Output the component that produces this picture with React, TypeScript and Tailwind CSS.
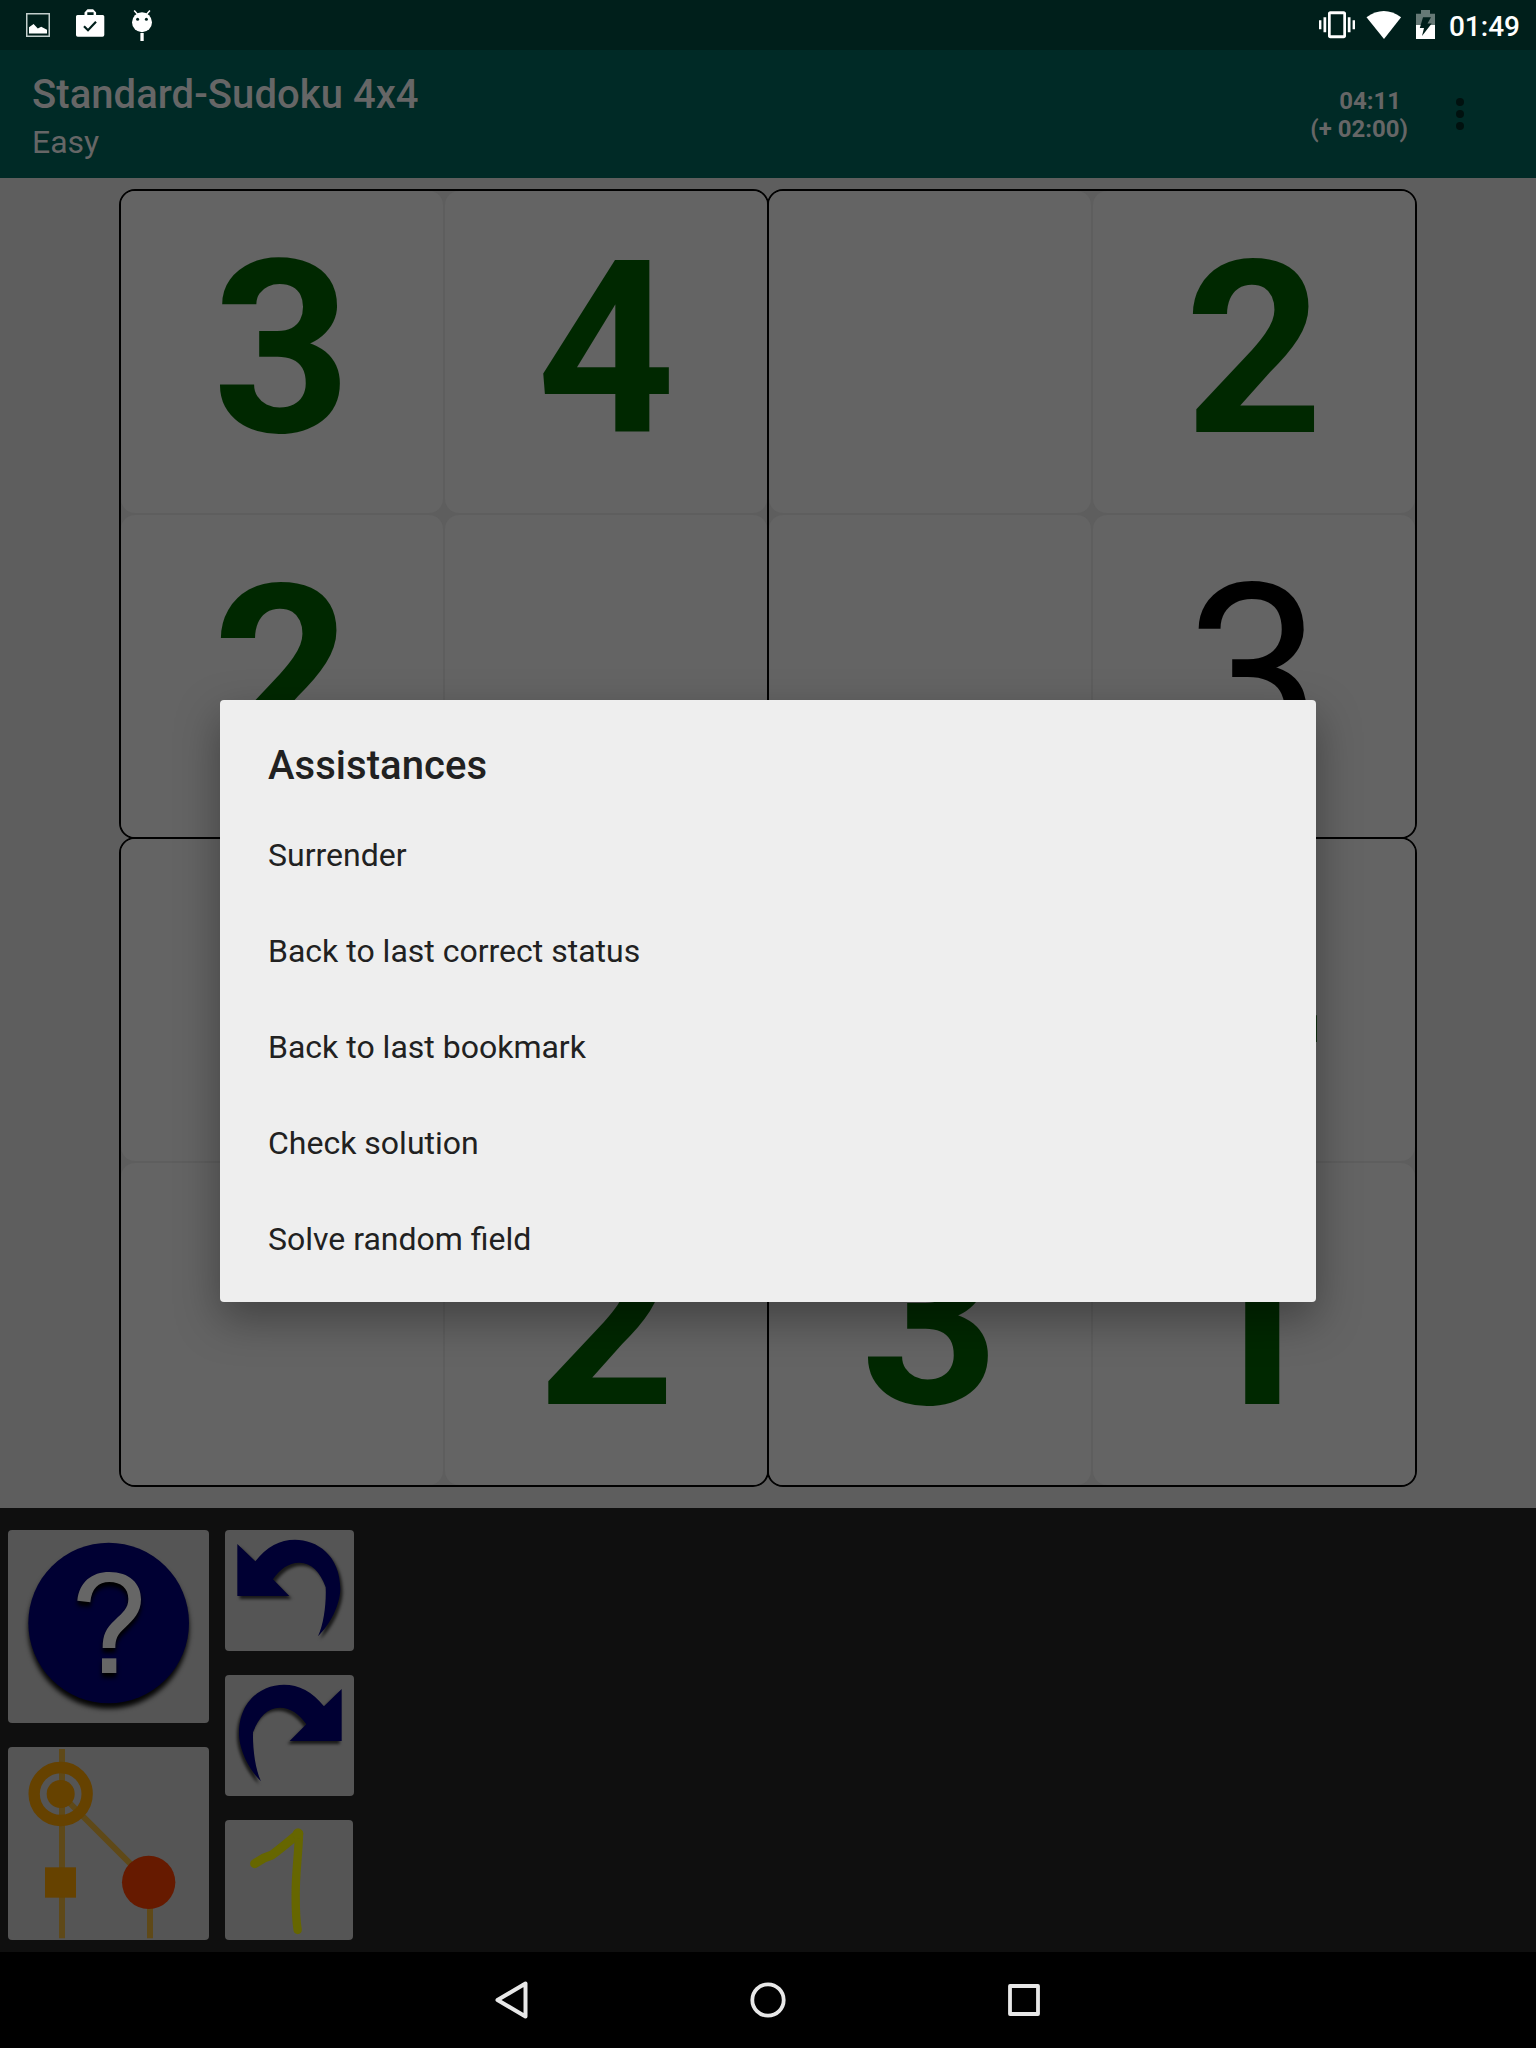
import React from "react";

type Cell = { value: string; given?: boolean };

const given = (value: string): Cell => ({ value, given: true });
const empty: Cell = { value: "" };

// Four 2x2 blocks, each listing its cells row by row.
const blocks: Cell[][] = [
  [given("3"), given("4"), given("2"), empty],
  [empty, given("2"), empty, { value: "3" }],
  [empty, empty, empty, given("2")],
  [empty, given("4"), given("3"), given("1")],
];

const assistances = [
  "Surrender",
  "Back to last correct status",
  "Back to last bookmark",
  "Check solution",
  "Solve random field",
];

function StatusBar() {
  return (
    <div className="flex h-[50px] items-start justify-between bg-[#001f1b] text-white">
      <svg className="h-[50px] w-[160px]" viewBox="0 0 160 50" fill="currentColor">
        <rect x="26.75" y="13.75" width="22.5" height="22.5" fill="none" stroke="#c2cecc" strokeWidth="1.5" />
        <path d="M29 33.5v-6.2l4.6-3.3 4.2 4.4 3.4-1.6 5.8 3v3.7z" />
        <path
          fillRule="evenodd"
          d="M84.500 15v-2.600l3-3.200h5.600l3 3.200V15h6.700q1.500 0 1.500 1.500v18.500q0 1.800-1.800 1.800H77.800q-1.800 0-1.800-1.800V16.500q0-1.500 1.500-1.500zm2.800 0h6.300v-2.800h-6.300z"
        />
        <path d="M84 26.200l4 4 8-8.500" fill="none" stroke="#001f1b" strokeWidth="2.200" />
        <circle cx="142" cy="22.200" r="10" />
        <path d="M134.200 10.500l3.500 4M149.900 10.500l-3.500 4" stroke="currentColor" strokeWidth="1.500" />
        <circle cx="137.600" cy="19.300" r="1.500" fill="#001f1b" />
        <circle cx="146.400" cy="19.300" r="1.500" fill="#001f1b" />
        <rect x="140.400" y="33" width="3.300" height="8" />
      </svg>
      <div className="flex h-[50px] items-start pr-4">
        <svg className="h-[50px] w-[131px]" viewBox="1318 0 131 50" fill="currentColor">
          <path
            transform="translate(1319 6.800) scale(1.500)"
            d="M0 15h1.600V9H0v6zm3 2h1.800V7H3v10zm19.400-8v6H24V9h-1.600zm-3.200 8H21V7h-1.800v10zM16.500 3h-9C6.670 3 6 3.670 6 4.500v15c0 .83.67 1.500 1.500 1.500h9c.83 0 1.500-.67 1.500-1.500v-15c0-.83-.67-1.500-1.500-1.500zM16.200 19H7.800V5h8.400v14z"
          />
          <path d="M1366.500 17.200q17.300-12.400 34.600 0L1384 39z" />
          <path d="M1416 25V13.700h5V10h9v3.700h5V25z" fill="#667976" />
          <path d="M1416 25h19v14h-19z" />
          <path d="M1423 17.300h8l-3.500 6.200h4.200l-9.700 12.500 2-8h-4.200z" fill="#001f1b" />
        </svg>
        <span className="mt-[11px] text-[28px] font-medium leading-8">01:49</span>
      </div>
    </div>
  );
}

function AppBar() {
  return (
    <header className="flex h-32 justify-between bg-[#002a26] pl-8 text-[#666666]">
      <div className="pt-[21px]">
        <h1 className="text-[40px] font-medium leading-[48px] tracking-[0.05px]">Standard-Sudoku 4x4</h1>
        <p className="mt-1 text-[32px] leading-[38px]">Easy</p>
      </div>
      <div className="flex">
        <div className="pt-[37px] text-right text-2xl font-bold leading-7">
          <div className="pr-[7px]">04:11</div>
          <div>(+ 02:00)</div>
        </div>
        <svg className="ml-12 mr-[72px] mt-[46px] h-9 w-2" viewBox="0 0 8 36" fill="#00110f">
          <circle cx="4" cy="6" r="4" />
          <circle cx="4" cy="18" r="4" />
          <circle cx="4" cy="30" r="4" />
        </svg>
      </div>
    </header>
  );
}

function Board() {
  return (
    <main className="flex h-[1330px] justify-center bg-[#5e5e5e] pt-[11px]">
      <div className="grid h-[1298px] w-[1298px] grid-cols-[648px_648px] grid-rows-[648px_648px]">
        {blocks.map((cells, b) => (
          <section
            key={b}
            className="grid h-[650px] w-[650px] grid-cols-2 grid-rows-2 gap-[2px] rounded-2xl border-2 border-black"
          >
            {cells.map((cell, c) => (
              <div
                key={c}
                className="flex items-center justify-center overflow-hidden rounded-[14px] bg-[#646464] pb-[7px] text-[242px] leading-none"
              >
                <span className={cell.given ? "font-bold text-[#002800]" : "text-black"}>{cell.value}</span>
              </div>
            ))}
          </section>
        ))}
      </div>
    </main>
  );
}

function HelpIcon() {
  return (
    <svg className="h-full w-full" viewBox="24 90 603 579">
      <circle cx="326" cy="369" r="241" fill="#000033" className="drop-shadow-[0_16px_8px_rgba(0,0,0,0.95)]" />
      <g fill="#666666" className="drop-shadow-[0_14px_6px_rgba(0,0,0,1)]">
        <path d="M232 302C238 246 275 216 328 216C388 216 423 250 423 298C423 338 400 360 375 383C352 404 346 416 346 444H308C308 405 318 385 345 360C368 338 385 325 385 297C385 265 363 246 328 246C295 246 275 265 271 307Z" />
        <rect x="306" y="475" width="43" height="44" />
      </g>
    </svg>
  );
}

function HistoryIcon() {
  return (
    <svg className="h-full w-full" viewBox="24 741 603 579">
      <g stroke="#5f4918" strokeWidth="18" fill="none">
        <path d="M186 747V1315M450 1147V1315M182 882L447 1147" />
      </g>
      <circle cx="182" cy="882" r="79.500" fill="none" stroke="#664200" strokeWidth="34" />
      <circle cx="182" cy="882" r="42" fill="#664200" />
      <rect x="135" y="1102" width="93" height="91" fill="#664200" />
      <circle cx="446" cy="1147" r="80" fill="#661a00" />
    </svg>
  );
}

function UndoIcon() {
  return (
    <svg className="h-full w-full" viewBox="675 90 387 363">
      <path
        className="drop-shadow-[7px_9px_5px_rgba(0,0,0,0.7)]"
        fill="#000033"
        d="M712 132L766 184C800 140 840 119 885 119C950 119 1021 165 1021 268C1020 315 990 375 954 409C972 370 979 310 977 262C960 215 935 188 898 188C865 188 840 208 819 238L868 288H712Z"
      />
    </svg>
  );
}

function RedoIcon() {
  return (
    <svg className="h-full w-full" viewBox="675 525 387 363">
      <path
        className="drop-shadow-[-6px_9px_5px_rgba(0,0,0,0.7)]"
        fill="#000033"
        d="M1025 567L972 619C937 575 897 554 852 554C787 554 716 600 717 703C718 750 747 810 783 844C765 805 758 745 759 697C777 650 802 623 840 623C872 623 898 643 919 673L869 723H1025Z"
      />
    </svg>
  );
}

function NoteIcon() {
  return (
    <svg className="h-full w-full" viewBox="675 960 384 360" fill="none" stroke="#666600" strokeLinecap="round" strokeLinejoin="round">
      <path d="M764 1091L790 1075L814 1066C842 1046 868 1023 894 1002" strokeWidth="27" />
      <path d="M897 1000C896 1060 886 1120 887 1190C887 1235 889 1265 893 1290" strokeWidth="25" />
      <circle cx="894" cy="1001" r="8" strokeWidth="16" />
    </svg>
  );
}

function Tools() {
  return (
    <div className="flex h-[444px] gap-4 bg-[#0f0f0f] pl-2 pt-[22px]">
      <div className="flex w-[201px] flex-col gap-6">
        <div className="h-[193px] rounded bg-[#555555]"><HelpIcon /></div>
        <div className="h-[193px] rounded bg-[#555555]"><HistoryIcon /></div>
      </div>
      <div className="flex w-[129px] flex-col gap-6">
        <div className="h-[121px] rounded bg-[#555555]"><UndoIcon /></div>
        <div className="h-[121px] rounded bg-[#555555]"><RedoIcon /></div>
        <div className="h-[120px] w-32 rounded bg-[#555555]"><NoteIcon /></div>
      </div>
    </div>
  );
}

function NavBar() {
  return (
    <nav className="flex h-24 items-center justify-center gap-[208px] bg-black">
      <svg className="h-12 w-12" viewBox="0 0 48 48" fill="none" stroke="#e8e8e8" strokeWidth="4" strokeLinejoin="round">
        <path d="M9.500 24L37.500 7.500V40.500Z" />
      </svg>
      <svg className="h-12 w-12" viewBox="0 0 48 48" fill="none" stroke="#e8e8e8" strokeWidth="3.800">
        <circle cx="24" cy="24" r="15.700" />
      </svg>
      <svg className="h-12 w-12" viewBox="0 0 48 48" fill="none" stroke="#e8e8e8" strokeWidth="3.800" strokeLinejoin="round">
        <rect x="10" y="10" width="28" height="28" />
      </svg>
    </nav>
  );
}

function AssistancesDialog() {
  return (
    <div className="absolute left-[220px] top-[700px] h-[602px] w-[1096px] rounded bg-[#eeeeee] px-12 pt-[42px] text-[#212121] shadow-[0_17px_44px_rgba(0,0,0,0.35)]">
      <h2 className="mb-[17px] text-[40px] font-medium leading-[48px] tracking-[0.05px]">Assistances</h2>
      <ul>
        {assistances.map((item) => (
          <li key={item} className="flex h-24 items-center text-[32px]">{item}</li>
        ))}
      </ul>
    </div>
  );
}

export default function App() {
  return (
    <div className="relative h-[2048px] w-[1536px] overflow-hidden bg-black font-['Roboto',sans-serif]">
      <StatusBar />
      <AppBar />
      <Board />
      <Tools />
      <NavBar />
      <AssistancesDialog />
    </div>
  );
}
